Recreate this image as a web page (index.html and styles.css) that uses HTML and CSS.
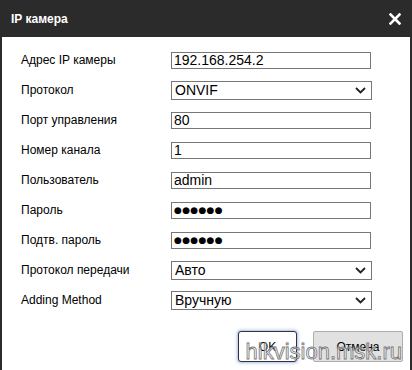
FILE: index.html
```html
<!DOCTYPE html>
<html lang="ru">
<head>
  <meta charset="UTF-8" />
  <title>IP камера</title>
  <link rel="stylesheet" href="styles.css">
</head>
<body>
  <div class="dialog">
    <div class="header">
      <span class="title">IP камера</span>
      <svg class="close" width="12" height="12" viewBox="0 0 12 12">
        <path d="M1.5 1.5 L10.5 10.5 M10.5 1.5 L1.5 10.5" stroke="#fff" stroke-width="2.6" stroke-linecap="square"/>
      </svg>
    </div>
    <div class="content">
      <div class="form">
        <label>Адрес IP камеры</label>
        <input class="field" type="text" value="192.168.254.2" />

        <label>Протокол</label>
        <div class="select-wrap">
          <select class="select"><option>ONVIF</option></select>
          <svg class="chevron" width="11" height="7" viewBox="0 0 11 7"><path d="M1 1 L5.5 5.5 L10 1" fill="none" stroke="#222" stroke-width="1.8"/></svg>
        </div>

        <label>Порт управления</label>
        <input class="field" type="text" value="80" />

        <label>Номер канала</label>
        <input class="field" type="text" value="1" />

        <label>Пользователь</label>
        <input class="field" type="text" value="admin" />

        <label>Пароль</label>
        <input class="field dots" type="text" value="●●●●●●" />

        <label>Подтв. пароль</label>
        <input class="field dots" type="text" value="●●●●●●" />

        <label>Протокол передачи</label>
        <div class="select-wrap">
          <select class="select"><option>Авто</option></select>
          <svg class="chevron" width="11" height="7" viewBox="0 0 11 7"><path d="M1 1 L5.5 5.5 L10 1" fill="none" stroke="#222" stroke-width="1.8"/></svg>
        </div>

        <label>Adding Method</label>
        <div class="select-wrap">
          <select class="select"><option>Вручную</option></select>
          <svg class="chevron" width="11" height="7" viewBox="0 0 11 7"><path d="M1 1 L5.5 5.5 L10 1" fill="none" stroke="#222" stroke-width="1.8"/></svg>
        </div>
      </div>
      <div class="buttons">
        <button class="btn btn-ok">OK</button>
        <button class="btn btn-cancel">Отмена</button>
      </div>
      <div class="watermark">hikvision.msk.ru</div>
    </div>
  </div>
</body>
</html>
```
FILE: styles.css
```css
body {
  margin: 0;
  width: 412px;
  height: 370px;
  background: #2b2b2b;
  font-family: "Liberation Sans", Arial, sans-serif;
  overflow: hidden;
}
.dialog {
  display: flex;
  flex-direction: column;
  height: 370px;
}
.header {
  height: 37px;
  display: flex;
  align-items: center;
  justify-content: space-between;
  padding: 0 11px 0 11px;
  color: #fff;
}
.title {
  font-size: 12px;
  font-weight: bold;
  margin-top: 1px;
}
.content {
  position: relative;
  flex: 1;
  background: #fff;
  margin: 0 2px 0 2px;
  padding: 8px 0 0 19px;
}
.form {
  display: grid;
  grid-template-columns: 150px 201px;
  grid-auto-rows: 30px;
  align-items: center;
}
.form label {
  font-size: 12px;
  color: #000;
}
.field {
  box-sizing: border-box;
  width: 200px;
  height: 17px;
  margin: 0;
  padding: 0 2px;
  border: 1px solid #777;
  border-radius: 0;
  font-family: "Liberation Sans", Arial, sans-serif;
  font-size: 14px;
  color: #000;
  outline: none;
}
.dots {
  font-family: "DejaVu Sans", sans-serif;
  font-size: 9px;
  letter-spacing: 0.3px;
  padding-left: 2px;
}
.select-wrap {
  position: relative;
  width: 201px;
  height: 19px;
}
.select {
  appearance: none;
  -webkit-appearance: none;
  box-sizing: border-box;
  width: 201px;
  height: 19px;
  margin: 0;
  padding: 0 0 0 3px;
  border: 1px solid #777;
  border-radius: 0;
  background: #fff;
  font-family: "Liberation Sans", Arial, sans-serif;
  font-size: 14px;
  color: #000;
}
.chevron {
  position: absolute;
  right: 6px;
  top: 6px;
  pointer-events: none;
}
.buttons {
  display: flex;
  justify-content: flex-end;
  gap: 16px;
  margin-top: 16px;
  padding-right: 7px;
}
.btn {
  box-sizing: border-box;
  height: 31px;
  font-family: "Liberation Sans", Arial, sans-serif;
  font-size: 12px;
  color: #000;
}
.btn-ok {
  width: 59px;
  background: #fff;
  border: 1px solid #333;
  border-radius: 3px;
  box-shadow: 0 0 3px 1px rgba(90, 130, 220, 0.55);
}
.btn-cancel {
  width: 90px;
  background: #e1e1e1;
  border: 1px solid #adadad;
  border-radius: 2px;
}
.watermark {
  position: absolute;
  right: 8px;
  bottom: 5px;
  font-family: "Liberation Sans", Arial, sans-serif;
  font-size: 22px;
  color: rgba(245, 245, 245, 0.7);
  -webkit-text-stroke: 0.8px #777;
  pointer-events: none;
}
```
